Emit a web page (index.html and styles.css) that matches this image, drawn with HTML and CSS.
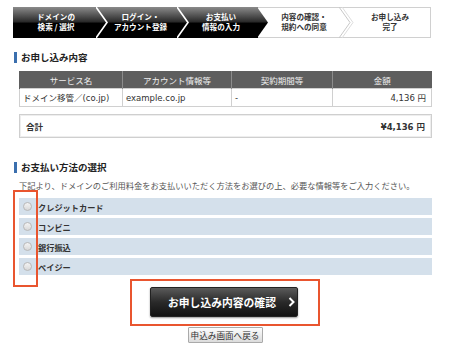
FILE: index.html
```html
<!DOCTYPE html>
<html lang="ja">
<head>
    <meta charset="UTF-8">
    <title>お支払い情報の入力</title>
    <link rel="stylesheet" href="styles.css">
</head>
<body>
    <div class="page">
        <div class="content">
            <ol class="steps">
                <li class="step dark s1">ドメインの<br>検索 / 選択
                    <svg class="chev" width="13" height="31" viewBox="0 0 13 31"><polyline points="0,0 11,15.5 0,31" fill="none" stroke="#fff" stroke-width="1.6"/></svg>
                </li>
                <li class="step dark s2">ログイン・<br>アカウント登録
                    <svg class="chev" width="13" height="31" viewBox="0 0 13 31"><polyline points="0,0 11,15.5 0,31" fill="none" stroke="#fff" stroke-width="1.6"/></svg>
                </li>
                <li class="step dark s3">お支払い<br>情報の入力
                    <svg class="chev" width="13" height="31" viewBox="0 0 13 31">
                        <defs>
                            <linearGradient id="darkGrad" x1="0" y1="0" x2="0" y2="1">
                                <stop offset="0" stop-color="#8a8a8a"/>
                                <stop offset="0.47" stop-color="#2b2b2b"/>
                                <stop offset="0.53" stop-color="#000"/>
                                <stop offset="1" stop-color="#000"/>
                            </linearGradient>
                        </defs>
                        <polygon points="0,0 11,15.5 0,31" fill="url(#darkGrad)"/>
                    </svg>
                </li>
                <li class="step light s4">内容の確認・<br>規約への同意
                    <svg class="chev" width="15" height="31" viewBox="0 0 15 31"><polyline points="0,0 11,15.5 0,31" fill="none" stroke="#c8c8c8" stroke-width="1"/><polyline points="3,0 14,15.5 3,31" fill="none" stroke="#dcdcdc" stroke-width="1"/></svg>
                </li>
                <li class="step light s5">お申し込み<br>完了</li>
            </ol>

            <h2 class="section-title">お申し込み内容</h2>
            <table class="order">
                <thead>
                    <tr>
                        <th class="c1">サービス名</th>
                        <th class="c2">アカウント情報等</th>
                        <th class="c3">契約期間等</th>
                        <th class="c4">金額</th>
                    </tr>
                </thead>
                <tbody>
                    <tr>
                        <td>ドメイン移管／(co.jp)</td>
                        <td>example.co.jp</td>
                        <td>-</td>
                        <td class="price">4,136 円</td>
                    </tr>
                </tbody>
            </table>
            <div class="total">
                <span>合計</span>
                <span class="total-price">¥4,136 円</span>
            </div>

            <h2 class="section-title pay-title">お支払い方法の選択</h2>
            <p class="lead">下記より、ドメインのご利用料金をお支払いいただく方法をお選びの上、必要な情報等をご入力ください。</p>
            <ul class="methods">
                <li><span class="radio"></span>クレジットカード</li>
                <li><span class="radio"></span>コンビニ</li>
                <li><span class="radio"></span>銀行振込</li>
                <li><span class="radio"></span>ペイジー</li>
            </ul>
        </div>

        <div class="actions">
            <div class="confirm-frame">
                <button type="button" class="confirm">お申し込み内容の確認
                    <svg width="7" height="10" viewBox="0 0 7 10"><polyline points="1.5,1 5.5,5 1.5,9" fill="none" stroke="#fff" stroke-width="2"/></svg>
                </button>
            </div>
            <button type="button" class="back">申込み画面へ戻る</button>
        </div>

        <!-- highlight around the radio buttons -->
        <div class="radio-mark"></div>
    </div>
</body>
</html>
```

FILE: styles.css
```css
body {
    margin: 0;
    padding: 0;
    background: #fff;
    font-family: "DejaVu Sans", "Noto Sans CJK JP", sans-serif;
    color: #333;
}
.page {
    position: relative;
    width: 450px;
    height: 362px;
    padding-top: 7px;
    box-sizing: border-box;
}
.content {
    margin: 0 18px 0 13px;
}

/* step bar */
.steps {
    display: flex;
    list-style: none;
    margin: 0;
    padding: 0;
    height: 31px;
}
.step {
    position: relative;
    box-sizing: border-box;
    height: 31px;
    padding: 5px 0 0 6px;
    font-family: "Noto Sans CJK JP", sans-serif;
    font-size: 7.6px;
    font-weight: bold;
    line-height: 10px;
    text-align: center;
}
.step.dark {
    color: #fff;
    background: linear-gradient(to bottom, #8a8a8a 0%, #2b2b2b 47%, #000 53%, #000 100%);
}
.step.light {
    color: #333;
    background: #fff;
    border-top: 1px solid #d0d0d0;
    border-bottom: 1px solid #d0d0d0;
    padding-top: 4px;
}
.s1 { width: 84px; padding-left: 2px; }
.s2 { width: 81px; }
.s3 { width: 80px; }
.s4 { width: 82px; padding-left: 10px; }
.s5 { width: 91px; border-right: 1px solid #d0d0d0; padding-left: 10px; }
.chev {
    position: absolute;
    top: 0;
    left: 100%;
    margin-left: -1px;
    z-index: 1;
}
.step.light .chev {
    top: -1px;
}

/* headings */
.section-title {
    margin: 14px 0 8px 1px;
    padding-left: 4px;
    border-left: 3px solid #3b6fae;
    font-family: "Noto Sans CJK JP", sans-serif;
    font-size: 9.5px;
    font-weight: bold;
    line-height: 11px;
    height: 11px;
    color: #222;
}
.pay-title {
    margin-top: 24px;
    margin-bottom: 6px;
}

/* order table */
.order {
    margin-left: 6px;
    width: 413px;
    border-collapse: collapse;
    font-size: 8.5px;
}
.order th {
    height: 17px;
    padding: 0;
    background: #5e5e5e;
    color: #eee;
    font-weight: normal;
    border-left: 1px solid #8c8c8c;
    font-family: "Noto Sans CJK JP", sans-serif;
}
.order th:first-child {
    border-left-color: #5e5e5e;
}
.order td {
    height: 17px;
    padding: 0 3px;
    border: 1px solid #d0d0d0;
    text-align: left;
    line-height: 12px;
}
.order .c1 { width: 102px; }
.order .c2 { width: 108px; }
.order .c3 { width: 100px; }
.order td.price {
    text-align: right;
    padding-right: 5px;
}
.total {
    display: flex;
    justify-content: space-between;
    align-items: center;
    box-sizing: border-box;
    margin: 7px 0 0 6px;
    width: 413px;
    height: 24px;
    padding: 0 6px;
    border: 1px solid #cfcfcf;
    box-shadow: inset 0 0 0 1px #eee;
    font-size: 8.5px;
    font-weight: bold;
}

/* payment methods */
.lead {
    margin: 0 0 7px 6px;
    font-family: "Noto Sans CJK JP", sans-serif;
    font-size: 8.25px;
    line-height: 12px;
    color: #555;
    white-space: nowrap;
}
.methods {
    list-style: none;
    margin: 0 0 0 6px;
    padding: 0;
    width: 413px;
    display: flex;
    flex-direction: column;
    gap: 3px;
}
.methods li {
    display: flex;
    align-items: center;
    height: 17px;
    padding-left: 4px;
    background: #d4e0eb;
    font-family: "Noto Sans CJK JP", sans-serif;
    font-size: 8.2px;
    font-weight: bold;
    color: #333;
}
.radio {
    width: 7px;
    height: 7px;
    margin-right: 6px;
    border: 1px solid #b8b8b8;
    border-radius: 50%;
    background: linear-gradient(#f4f4f4, #d8d8d8);
}

/* buttons */
.actions {
    display: flex;
    flex-direction: column;
    align-items: center;
    margin-top: 4px;
}
.confirm-frame {
    box-sizing: border-box;
    width: 190px;
    height: 47px;
    padding: 6px 0 0 18px;
    border: 2px solid #e9552f;
}
.confirm {
    display: flex;
    align-items: center;
    gap: 12px;
    width: 148px;
    height: 30px;
    padding: 0 0 0 17px;
    border: 1px solid #222;
    border-radius: 2px;
    background: linear-gradient(to bottom, #5a5a5a 0%, #2a2a2a 50%, #111 100%);
    box-shadow: 0 1px 2px rgba(0, 0, 0, 0.4);
    color: #fff;
    font-family: "Noto Sans CJK JP", sans-serif;
    font-size: 10.8px;
    font-weight: bold;
    cursor: pointer;
}
.back {
    margin-top: 1px;
    width: 75px;
    height: 16px;
    padding: 0;
    border: 1px solid #aaa;
    border-radius: 1px;
    background: linear-gradient(#fdfdfd, #dcdcdc);
    color: #333;
    font-family: "Noto Sans CJK JP", sans-serif;
    font-size: 8.6px;
    line-height: 14px;
    cursor: pointer;
}
.radio-mark {
    position: absolute;
    left: 13px;
    top: 190px;
    width: 25px;
    height: 97px;
    box-sizing: border-box;
    border: 2px solid #e9552f;
}
```
